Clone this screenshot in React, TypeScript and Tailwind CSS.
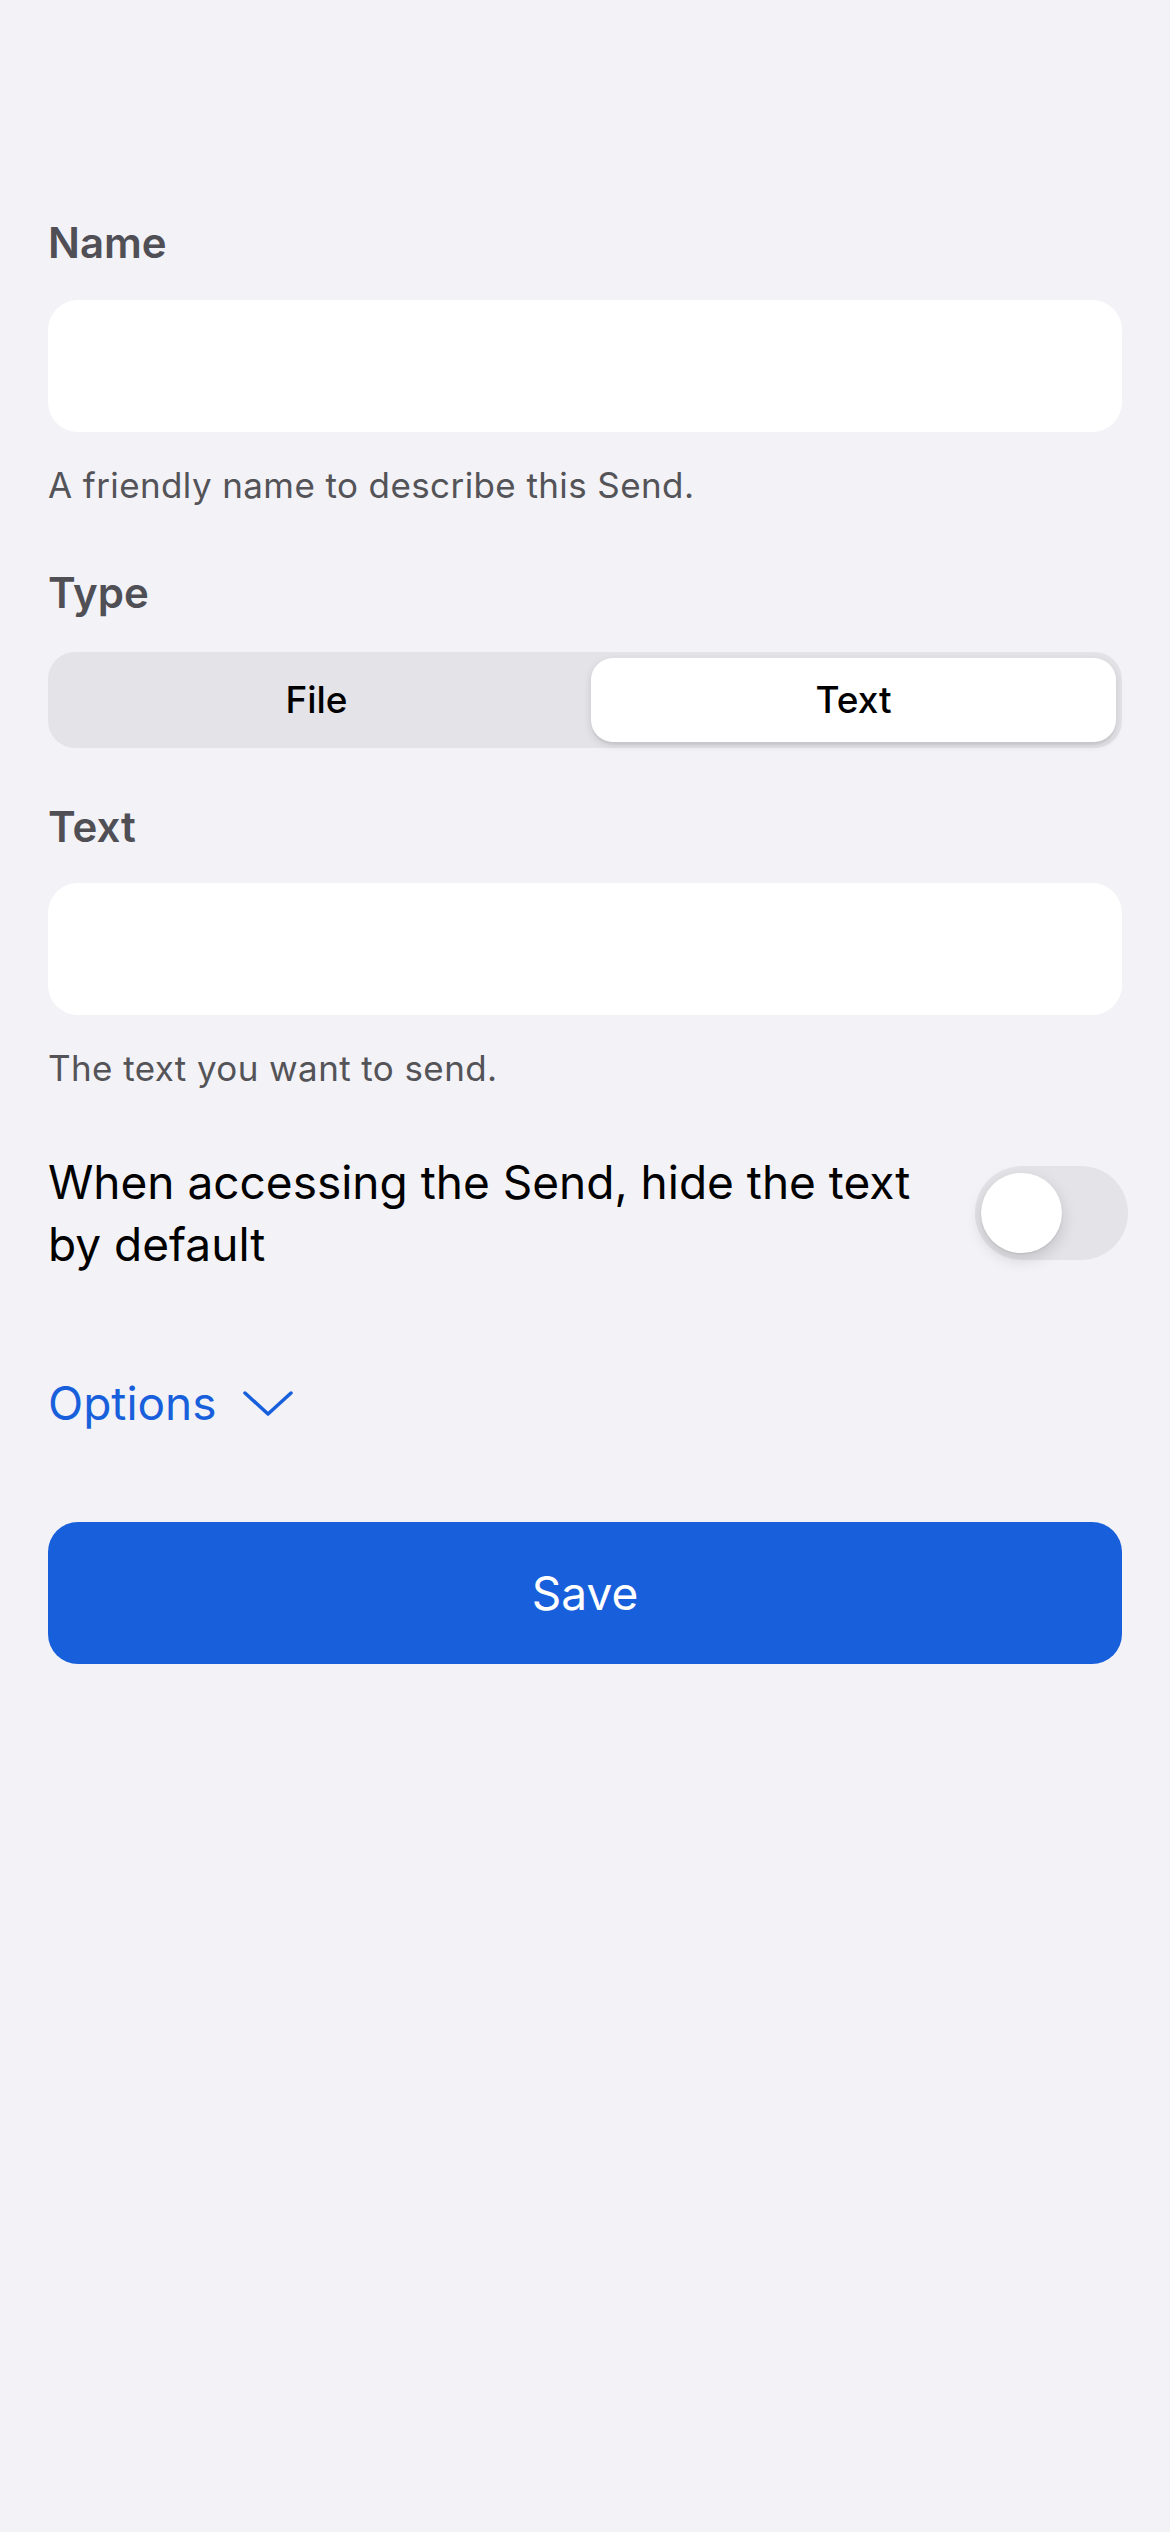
import { useState } from "react"

function FieldLabel({ children, className = "" }: { children: React.ReactNode; className?: string }) {
  return (
    <label className={`block text-[42px] leading-[50px] font-semibold text-[#4f4f55] ${className}`}>
      {children}
    </label>
  )
}

function Hint({ children }: { children: React.ReactNode }) {
  return <p className="mt-[31px] text-[35px] leading-[44px] tracking-[0.4px] text-[#545458]">{children}</p>
}

function Toggle({ on, onChange }: { on: boolean; onChange: (v: boolean) => void }) {
  return (
    <button
      type="button"
      onClick={() => onChange(!on)}
      className={`relative -mr-[6px] h-[94px] w-[153px] shrink-0 rounded-full ${on ? "bg-[#34c759]" : "bg-[#e3e3e8]"}`}
    >
      <span
        className={`absolute top-[7px] h-[80px] w-[81px] rounded-full bg-white shadow-[0_6px_16px_rgba(0,0,0,0.15),0_1px_2px_rgba(0,0,0,0.08)] ${on ? "left-[66px]" : "left-[6px]"}`}
      />
    </button>
  )
}

export default function App() {
  const [type, setType] = useState<"file" | "text">("text")
  const [hidden, setHidden] = useState(false)

  return (
    <div className="min-h-[2532px] bg-[#f2f2f7] px-[48px] pt-[218px] font-['Inter',sans-serif]">
      <FieldLabel>Name</FieldLabel>
      <div className="mt-[32px] h-[132px] rounded-[30px] bg-white" />
      <Hint>A friendly name to describe this Send.</Hint>

      <FieldLabel className="mt-[61px]">Type</FieldLabel>
      <div className="mt-[34px] grid h-[96px] grid-cols-2 gap-[12px] rounded-[27px] bg-[#e3e3e8] p-[6px]">
        {(["file", "text"] as const).map((t) => (
          <button
            key={t}
            type="button"
            onClick={() => setType(t)}
            className={`rounded-[22px] text-[37px] font-medium text-black ${
              type === t ? "bg-white shadow-[0_3px_8px_rgba(0,0,0,0.12),0_3px_1px_rgba(0,0,0,0.04)]" : ""
            }`}
          >
            {t === "file" ? "File" : "Text"}
          </button>
        ))}
      </div>

      <FieldLabel className="mt-[54px]">Text</FieldLabel>
      <div className="mt-[31px] h-[132px] rounded-[30px] bg-white" />
      <Hint>The text you want to send.</Hint>

      <div className="mt-[61px] flex items-center justify-between gap-[40px]">
        <p className="max-w-[880px] text-[46px] leading-[62px] text-black">
          When accessing the Send, hide the text by default
        </p>
        <Toggle on={hidden} onChange={setHidden} />
      </div>

      <button type="button" className="mt-[100px] flex items-center gap-[26px] text-[46px] leading-[56px] text-[#185fdc]">
        Options
        <svg width="50" height="26" viewBox="0 0 50 26" fill="none" className="mt-[2px]">
          <path d="M2 2 L25 23 L48 2" stroke="currentColor" strokeWidth="3.5" strokeLinecap="round" strokeLinejoin="round" />
        </svg>
      </button>

      <button
        type="button"
        className="mt-[91px] flex h-[142px] w-full items-center justify-center rounded-[30px] bg-[#185fdc] text-[46px] text-white"
      >
        Save
      </button>
    </div>
  )
}
